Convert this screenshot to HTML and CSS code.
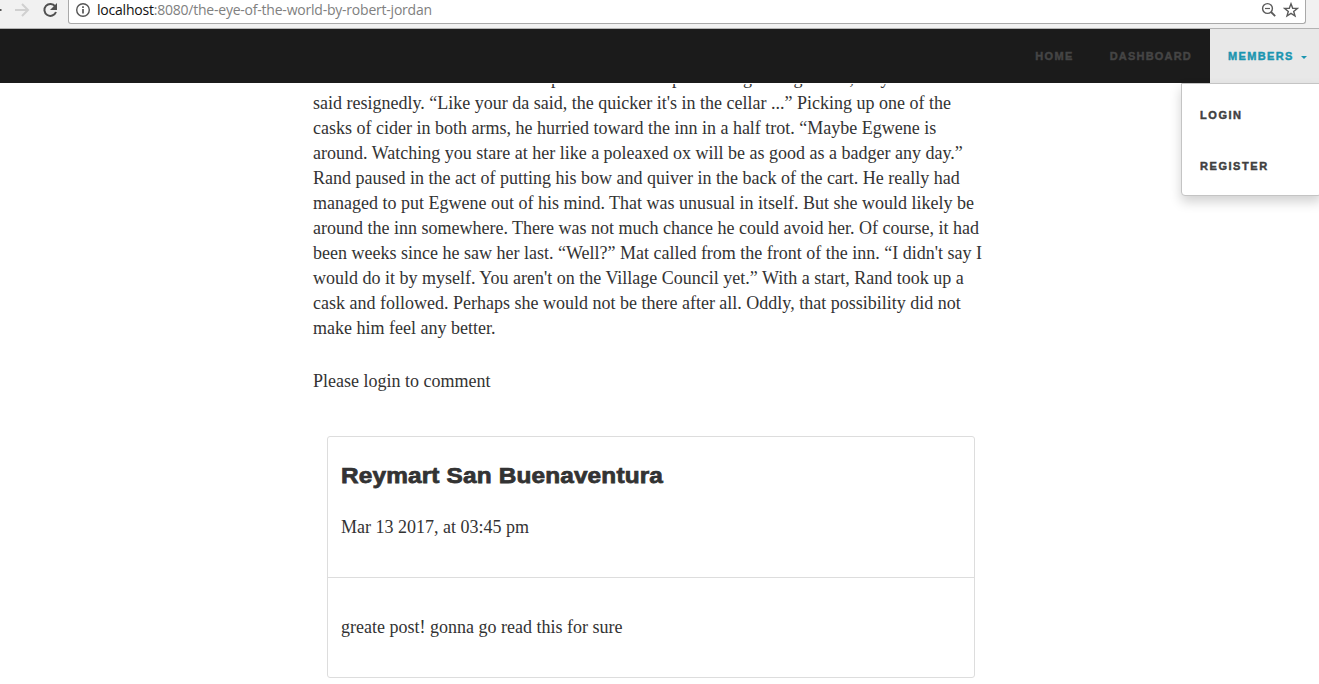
FILE: index.html
```html
<!DOCTYPE html>
<html lang="en">
<head>
<meta charset="utf-8">
<title>The Eye of the World by Robert Jordan</title>
<link rel="stylesheet" href="styles.css">
</head>
<body>
<header class="toolbar">
  <svg class="tool-icons" width="68" height="24" viewBox="0 0 68 24" fill="none">
    <path d="M0 10H1.5" stroke="#555" stroke-width="2"/>
    <path d="M15 10H27M22 4l6 6-6 6" stroke="#d0d0d0" stroke-width="2"/>
    <path d="M55.2 6.3A6 6 0 1 0 56 12" stroke="#505050" stroke-width="2"/>
    <path d="M57 3v7h-7z" fill="#505050"/>
  </svg>
  <div class="address">
    <svg width="16" height="16" viewBox="0 0 16 16" fill="none" stroke="#555">
      <circle cx="8" cy="8" r="6.3" stroke-width="1.4"/>
      <path d="M8 7v4.5M8 4.3V6" stroke-width="1.7"/>
    </svg>
    <span class="url"><b>localhost</b>:8080/the-eye-of-the-world-by-robert-jordan</span>
    <svg class="zoom" width="16" height="16" viewBox="0 0 16 16" fill="none" stroke="#5a5a5a">
      <circle cx="6.5" cy="6.5" r="4.9" stroke-width="1.4"/>
      <path d="M10 10l4.2 4.2" stroke-width="1.8"/><path d="M4 6.5h5" stroke-width="1.2"/>
    </svg>
    <svg width="16" height="16" viewBox="0 0 16 16" fill="none" stroke="#5a5a5a" stroke-width="1.4">
      <path d="M8 1.8l1.7 4.4 4.7.2-3.7 3 1.3 4.6L8 11.4 4 14l1.3-4.6-3.7-3 4.7-.2z"/>
    </svg>
  </div>
</header>
<nav class="navbar">
  <a class="link home">Home</a>
  <a class="link dash">Dashboard</a>
  <div class="members"><span class="link">Members</span><i class="caret"></i>
    <div class="menu"><a>Login</a><a>Register</a></div>
  </div>
</nav>
<main class="page">
  <div class="story">
    <p class="line">his friend. “You don't have to help. Dav won't keep that badger long.” “Oh, why not?” Mat</p>
    <p class="line">said resignedly. “Like your da said, the quicker it's in the cellar ...” Picking up one of the</p>
    <p class="line">casks of cider in both arms, he hurried toward the inn in a half trot. “Maybe Egwene is</p>
    <p class="line">around. Watching you stare at her like a poleaxed ox will be as good as a badger any day.”</p>
    <p class="line">Rand paused in the act of putting his bow and quiver in the back of the cart. He really had</p>
    <p class="line">managed to put Egwene out of his mind. That was unusual in itself. But she would likely be</p>
    <p class="line">around the inn somewhere. There was not much chance he could avoid her. Of course, it had</p>
    <p class="line">been weeks since he saw her last. “Well?” Mat called from the front of the inn. “I didn't say I</p>
    <p class="line">would do it by myself. You aren't on the Village Council yet.” With a start, Rand took up a</p>
    <p class="line">cask and followed. Perhaps she would not be there after all. Oddly, that possibility did not</p>
    <p class="line">make him feel any better.</p>
  </div>
  <p class="line notice">Please login to comment</p>
  <article class="card">
    <div class="head">
      <h3>Reymart San Buenaventura</h3>
      <p class="line">Mar 13 2017, at 03:45 pm</p>
    </div>
    <p class="line body">greate post! gonna go read this for sure</p>
  </article>
</main>
</body>
</html>
```
FILE: styles.css
```css
* { box-sizing: border-box; }
body { margin: 0; height: 684px; overflow: hidden; background: #fff; color: #333; font-family: "Liberation Serif", serif; }
.toolbar { height: 29px; background: #f1f1f1; border-bottom: 1px solid #b3b3b3; display: flex; align-items: flex-start; }
.tool-icons { flex: none; }
.address { width: 1238px; height: 24px; border: 1px solid #a9a9a9; border-top: 0; border-radius: 0 0 3px 3px; background: #fff; display: flex; padding: 2px 6px 0; }
.url { margin: -2px auto 0 6px; font: 14px/20px "Open Sans", sans-serif; letter-spacing: -.22px; color: #808080; }
.url b { font-weight: 400; color: #111; }
.zoom { margin-right: 6px; }
.navbar { position: relative; z-index: 1; height: 54px; background: #1b1b1b; box-shadow: 0 1px 0 #fff; display: flex; justify-content: flex-end; font: 900 11px/54px "Liberation Sans", sans-serif; letter-spacing: 1.35px; text-transform: uppercase; -webkit-text-stroke: .45px; }
.link { color: #454545; }
.home { margin-right: 36px; }
.dash { margin-right: 18px; letter-spacing: 1.2px; }
.members { position: relative; width: 109px; padding-left: 18px; background: #e8e8e8; display: flex; align-items: center; }
.members .link { color: #1b95b0; }
.caret { margin: 3px 0 0 7px; border: 3px solid transparent; border-top-color: #1b95b0; border-bottom: 0; }
.menu { position: absolute; top: 54px; right: -3px; width: 141px; height: 113px; background: #fff; border: 1px solid #c4c4c4; border-radius: 0 0 4px 4px; box-shadow: 0 6px 12px rgba(0,0,0,.18); padding: 6px 18px; line-height: 51px; letter-spacing: 1.55px; color: #404040; }
.menu a { display: block; }
.page { width: 674px; margin-left: 313px; }
.story { margin-top: -17px; }
.line { margin: 0; font-size: 18px; line-height: 25px; white-space: nowrap; }
.notice { margin-top: 28px; }
.card { width: 648px; height: 242px; margin: 42px 0 0 14px; border: 1px solid #ddd; border-radius: 3px; }
.head { height: 141px; border-bottom: 1px solid #ddd; padding: 25px 13px 0; }
h3 { margin: 0 0 25px; font: 900 22px/28px "Liberation Sans", sans-serif; letter-spacing: .15px; -webkit-text-stroke: .75px; white-space: nowrap; transform: scaleX(1.107); transform-origin: left; }
.body { padding: 37px 13px 0; }
```
